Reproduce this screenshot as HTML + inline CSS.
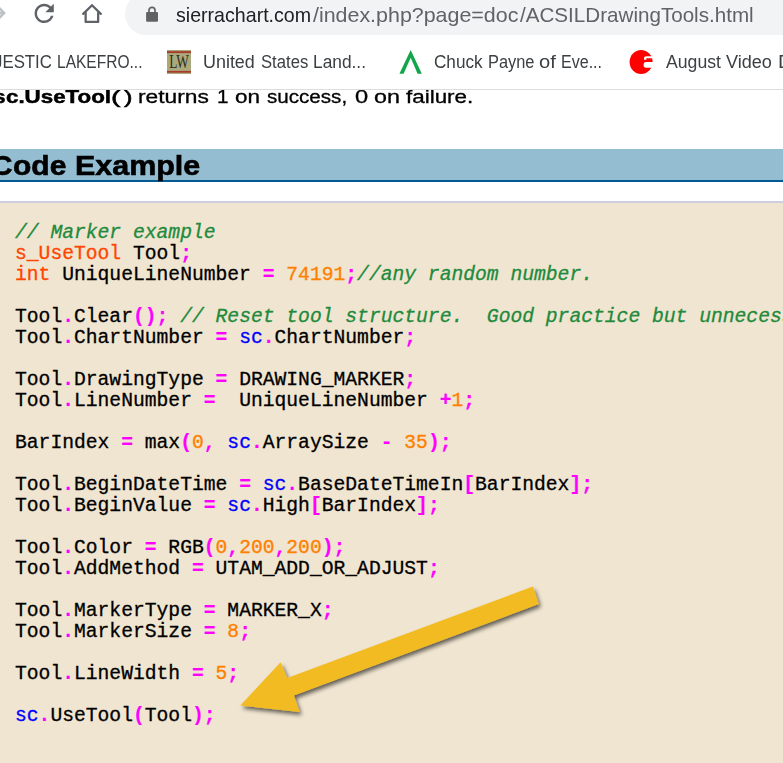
<!DOCTYPE html>
<html><head><meta charset="utf-8">
<style>
html,body{margin:0;padding:0;}
body{width:783px;height:763px;overflow:hidden;position:relative;background:#fff;font-family:"Liberation Sans",sans-serif;}
.abs{position:absolute;}
.pr{-webkit-text-stroke:0.3px #000;}
.pb{-webkit-text-stroke:0.5px #000;}
.hb{-webkit-text-stroke:0.6px #000;}
.t{position:absolute;display:inline-block;white-space:pre;line-height:40px;transform-origin:0 0;font-family:"Liberation Sans",sans-serif;}
#pill{left:125px;top:-7px;width:720px;height:42px;border-radius:21px;background:#f1f3f4;}
#sep{left:0;top:89px;width:783px;height:1px;background:#dadce0;z-index:5;}
#h2{left:0;top:149px;width:783px;height:31px;background:#95bdd1;border-bottom:2px solid #035b93;}
#code{left:0;top:201px;width:783px;height:600px;background:#f0e5d0;border-top:2px solid #cfcde0;}
pre{position:absolute;left:15px;top:223px;margin:0;-webkit-text-stroke:0.3px currentColor;font-family:"Liberation Mono",monospace;font-size:19.66px;line-height:21px;color:#000;}
.c{color:#218a3c;font-style:italic;-webkit-text-stroke:0.3px #218a3c;}
.k{color:#ff4500;}
.n{color:#ff7f00;}
.p{color:#ff00ff;font-weight:bold;-webkit-text-stroke:0.2px #ff00ff;}
.s{color:#0000ff;}
</style></head><body>
<!-- toolbar -->
<svg class="abs" style="left:0;top:0" width="110" height="30" viewBox="0 0 110 30">
  <path transform="translate(-18.1,-1.4) scale(1.2)" d="M12 4l-1.41 1.41L16.17 11H4v2h12.17l-5.58 5.59L12 20l8-8z" fill="#bdc1c6"/>
  <path transform="translate(29.8,-1.0) scale(1.2)" d="M17.65 6.35C16.2 4.9 14.21 4 12 4c-4.42 0-7.99 3.58-7.99 8s3.57 8 7.99 8c3.73 0 6.84-2.55 7.73-6h-2.08c-.82 2.33-3.04 4-5.65 4-3.31 0-6-2.69-6-6s2.69-6 6-6c1.66 0 3.14.69 4.22 1.78L13 11h7V4l-2.35 2.35z" fill="#5f6368"/>
  <path d="M83.2 13.9L92 5.3 100.8 13.9" fill="none" stroke="#5f6368" stroke-width="2.3" stroke-linecap="round" stroke-linejoin="miter"/>
  <path d="M85.65 12.3V21.9H98.15V12.3" fill="none" stroke="#5f6368" stroke-width="2.3" stroke-linejoin="round"/>
</svg>
<div id="pill" class="abs"></div>
<svg class="abs" style="left:140px;top:0" width="24" height="30" viewBox="0 0 24 30">
  <rect x="6.1" y="11.9" width="11.9" height="9.9" rx="1.2" fill="#626262"/>
  <path d="M9 12.5V10.3a3 3 0 0 1 6 0v2.2" fill="none" stroke="#626262" stroke-width="1.7"/>
</svg>
<!-- bookmarks -->
<svg class="abs" style="left:167px;top:50px" width="24" height="24" viewBox="0 0 24 24">
  <rect width="24" height="24" fill="#aaa97b"/>
  <rect y="1.2" width="24" height="1.9" fill="#a8392c"/>
  <rect y="20.9" width="24" height="1.8" fill="#a8392c"/>
  <text transform="translate(12,17.6) scale(0.74,1)" text-anchor="middle" font-family="Liberation Serif" font-size="18" fill="#2e2a22">LW</text>
</svg>
<svg class="abs" style="left:390px;top:45px" width="40" height="35" viewBox="390 45 40 35">
  <polygon points="399.4,73.7 410.7,49.9 421.8,73.7 417.6,73.7 410.7,57.8 403.6,73.7" fill="#12a64b"/>
</svg>
<svg class="abs" style="left:625px;top:45px" width="35" height="35" viewBox="625 45 35 35">
  <ellipse cx="641.1" cy="61.9" rx="11.5" ry="12" fill="#ff0000"/>
  <path d="M646 56.2H653V58.3H646.3V59.8H644V58.2Q644 56.2 646 56.2Z" fill="#fff"/>
  <path d="M646 62H653V67.8H646Q643.6 67.8 643.6 65V64.6Q643.6 62 646 62Z" fill="#fff"/>
</svg>
<div id="sep" class="abs"></div>
<!-- page -->
<div id="h2" class="abs"></div>
<div id="code" class="abs"></div>
<pre><span class="c">// Marker example</span>
<span class="k">s_UseTool</span> Tool<span class="p">;</span>
<span class="k">int</span> UniqueLineNumber <span class="p">=</span> <span class="n">74191</span><span class="p">;</span><span class="c">//any random number.</span>

Tool<span class="p">.</span>Clear<span class="p">();</span> <span class="c">// Reset tool structure.  Good practice but unnecessary in this case.</span>
Tool<span class="p">.</span>ChartNumber <span class="p">=</span> <span class="s">sc</span><span class="p">.</span>ChartNumber<span class="p">;</span>

Tool<span class="p">.</span>DrawingType <span class="p">=</span> DRAWING_MARKER<span class="p">;</span>
Tool<span class="p">.</span>LineNumber <span class="p">=</span>  UniqueLineNumber <span class="p">+</span><span class="n">1</span><span class="p">;</span>

BarIndex <span class="p">=</span> max<span class="p">(</span><span class="n">0</span><span class="p">,</span> <span class="s">sc</span><span class="p">.</span>ArraySize <span class="p">-</span> <span class="n">35</span><span class="p">);</span>

Tool<span class="p">.</span>BeginDateTime <span class="p">=</span> <span class="s">sc</span><span class="p">.</span>BaseDateTimeIn<span class="p">[</span>BarIndex<span class="p">];</span>
Tool<span class="p">.</span>BeginValue <span class="p">=</span> <span class="s">sc</span><span class="p">.</span>High<span class="p">[</span>BarIndex<span class="p">];</span>

Tool<span class="p">.</span>Color <span class="p">=</span> RGB<span class="p">(</span><span class="n">0</span><span class="p">,</span><span class="n">200</span><span class="p">,</span><span class="n">200</span><span class="p">);</span>
Tool<span class="p">.</span>AddMethod <span class="p">=</span> UTAM_ADD_OR_ADJUST<span class="p">;</span>

Tool<span class="p">.</span>MarkerType <span class="p">=</span> MARKER_X<span class="p">;</span>
Tool<span class="p">.</span>MarkerSize <span class="p">=</span> <span class="n">8</span><span class="p">;</span>

Tool<span class="p">.</span>LineWidth <span class="p">=</span> <span class="n">5</span><span class="p">;</span>

<span class="s">sc</span><span class="p">.</span>UseTool<span class="p">(</span>Tool<span class="p">);</span>
</pre>
<span class="t " style="left:175.57px;top:-5.30px;font-size:21px;font-weight:normal;color:#202124;transform:scaleX(0.9336)">sierrachart.com</span>
<span class="t " style="left:313.00px;top:-5.30px;font-size:21px;font-weight:normal;color:#5f6368;transform:scaleX(1.0194)">/index.php?page=doc</span>
<span class="t " style="left:520.40px;top:-5.30px;font-size:21px;font-weight:normal;color:#5f6368;transform:scaleX(0.9814)">/ACSILDrawingTools.html</span>
<span class="t " style="left:-5.74px;top:42.00px;font-size:18.3px;font-weight:normal;color:#3c4043;transform:scaleX(0.9200)">JESTIC</span>
<span class="t " style="left:56.65px;top:42.00px;font-size:18.3px;font-weight:normal;color:#3c4043;transform:scaleX(0.8500)">LAKEFRO...</span>
<span class="t " style="left:203.02px;top:42.00px;font-size:18.3px;font-weight:normal;color:#3c4043;transform:scaleX(0.9804)">United</span>
<span class="t " style="left:260.99px;top:42.00px;font-size:18.3px;font-weight:normal;color:#3c4043;transform:scaleX(0.9120)">States</span>
<span class="t " style="left:313.25px;top:42.00px;font-size:18.3px;font-weight:normal;color:#3c4043;transform:scaleX(0.9472)">Land...</span>
<span class="t " style="left:433.66px;top:42.00px;font-size:18.3px;font-weight:normal;color:#3c4043;transform:scaleX(0.9373)">Chuck</span>
<span class="t " style="left:488.40px;top:42.00px;font-size:18.3px;font-weight:normal;color:#3c4043;transform:scaleX(0.8960)">Payne</span>
<span class="t " style="left:538.80px;top:42.00px;font-size:18.3px;font-weight:normal;color:#3c4043;transform:scaleX(1.1000)">of</span>
<span class="t " style="left:560.62px;top:42.00px;font-size:18.3px;font-weight:normal;color:#3c4043;transform:scaleX(0.8773)">Eve...</span>
<span class="t " style="left:665.50px;top:42.00px;font-size:18.3px;font-weight:normal;color:#3c4043;transform:scaleX(0.9649)">August</span>
<span class="t " style="left:726.00px;top:42.00px;font-size:18.3px;font-weight:normal;color:#3c4043;transform:scaleX(0.9891)">Video</span>
<span class="t " style="left:778.30px;top:42.00px;font-size:18.3px;font-weight:normal;color:#3c4043;transform:scaleX(1.1000)">D</span>
<span class="t pb" style="left:5.66px;top:76.50px;font-size:18px;font-weight:bold;color:#000;transform:scaleX(1.2398)">c.UseTool</span>
<span class="t pb" style="left:110.62px;top:76.50px;font-size:18px;font-weight:normal;color:#000;transform:scaleX(1.5800)">(</span>
<span class="t pb" style="left:123.70px;top:76.50px;font-size:18px;font-weight:normal;color:#000;transform:scaleX(1.4200)">)</span>
<span class="t pb" style="left:-5.75px;top:76.50px;font-size:18px;font-weight:bold;color:#000;transform:scaleX(1.1500)">s</span>
<span class="t pr" style="left:138.43px;top:76.50px;font-size:18px;font-weight:normal;color:#000;transform:scaleX(1.2655)">returns</span>
<span class="t pr" style="left:217.35px;top:76.50px;font-size:18px;font-weight:normal;color:#000;transform:scaleX(1.1500)">1</span>
<span class="t pr" style="left:234.95px;top:76.50px;font-size:18px;font-weight:normal;color:#000;transform:scaleX(1.2500)">on</span>
<span class="t pr" style="left:266.76px;top:76.50px;font-size:18px;font-weight:normal;color:#000;transform:scaleX(1.1441)">success,</span>
<span class="t pr" style="left:354.99px;top:76.50px;font-size:18px;font-weight:normal;color:#000;transform:scaleX(1.3111)">0</span>
<span class="t pr" style="left:373.91px;top:76.50px;font-size:18px;font-weight:normal;color:#000;transform:scaleX(1.2944)">on</span>
<span class="t pr" style="left:406.00px;top:76.50px;font-size:18px;font-weight:normal;color:#000;transform:scaleX(1.2453)">failure.</span>
<span class="t hb" style="left:13.19px;top:145.60px;font-size:27px;font-weight:bold;color:#000;transform:scaleX(1.1109)">ode</span>
<span class="t hb" style="left:74.84px;top:145.60px;font-size:27px;font-weight:bold;color:#000;transform:scaleX(1.1278)">Example</span>
<span class="t hb" style="left:-9.20px;top:145.60px;font-size:27px;font-weight:bold;color:#000;transform:scaleX(1.1000)">C</span>
<!-- arrow -->
<svg class="abs" style="left:0;top:0" width="783" height="763" viewBox="0 0 783 763">
  <defs><filter id="sh" x="-10%" y="-10%" width="130%" height="130%"><feGaussianBlur in="SourceAlpha" stdDeviation="2.2"/><feOffset dx="2.2" dy="3"/><feComponentTransfer><feFuncA type="linear" slope="0.6"/></feComponentTransfer><feMerge><feMergeNode/><feMergeNode in="SourceGraphic"/></feMerge></filter></defs>
  <polygon filter="url(#sh)" fill="#f3bb22" points="240.3,705.5 299.7,712.1 293.9,695.5 538.8,604 532.9,586.6 287.3,678.1 280.6,662.3"/>
</svg>
</body></html>
